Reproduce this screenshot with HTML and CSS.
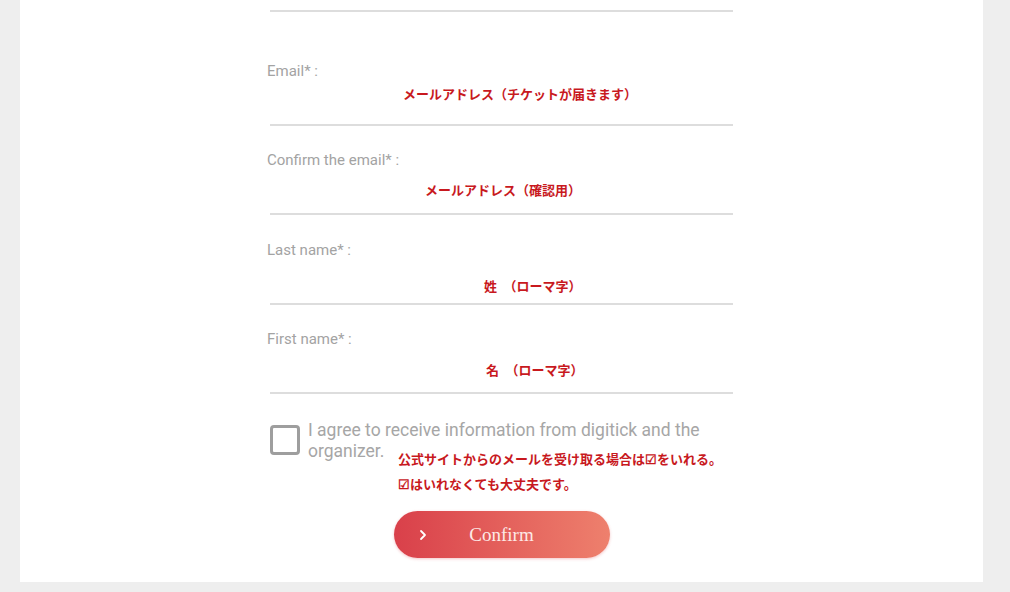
FILE: index.html
```html
<!DOCTYPE html>
<html lang="ja">
<head>
  <meta charset="UTF-8">
  <meta name="viewport" content="width=device-width, initial-scale=1.0">
  <title>Digitick - Coordonnées</title>
  <link rel="stylesheet" href="styles.css">
</head>
<body>
  <div class="panel">
    <form class="form">
      <!-- champ précédent, seul le bas est visible -->
      <div class="field field-prev"></div>

      <div class="field field-first">
        <label class="label">Email* :</label>
        <div class="input">
          <span class="note note-email">メールアドレス（チケットが届きます）</span>
        </div>
      </div>

      <div class="field">
        <label class="label">Confirm the email* :</label>
        <div class="input">
          <span class="note note-confirm">メールアドレス（確認用）</span>
        </div>
      </div>

      <div class="field field-last">
        <label class="label">Last name* :</label>
        <div class="input">
          <span class="note note-last">姓　（ローマ字）</span>
        </div>
      </div>

      <div class="field">
        <label class="label">First name* :</label>
        <div class="input">
          <span class="note note-firstname">名　（ローマ字）</span>
        </div>
      </div>

      <div class="optin">
        <span class="checkbox"></span>
        <span class="optin-text">I agree to receive information from digitick and the organizer.</span>
        <div class="optin-note">
          公式サイトからのメールを受け取る場合は☑をいれる。<br>
          ☑はいれなくても大丈夫です。
        </div>
      </div>

      <button type="button" class="btn-confirm">
        <svg class="chevron" width="8" height="12" viewBox="0 0 8 12">
          <polyline points="2,2 6,6 2,10" fill="none" stroke="#fff" stroke-width="1.8" stroke-linecap="round" stroke-linejoin="round"/>
        </svg>
        <span class="btn-label">Confirm</span>
        <span></span>
      </button>
    </form>
  </div>
</body>
</html>
```

FILE: styles.css
```css
html, body {
  margin: 0;
  padding: 0;
}
body {
  background: #eeeeee;
  font-family: Roboto, "Liberation Sans", "Noto Sans CJK JP", sans-serif;
  padding-bottom: 10px;
}
.panel {
  background: #fff;
  margin: 0 27px 0 20px;
  padding-bottom: 24px;
}
.form {
  width: 463px;
  margin: 0 auto;
  display: flex;
  flex-direction: column;
}

.field {
  padding-top: 24px;
  border-bottom: 2px solid #dddddd;
}
.field-prev {
  padding-top: 10px;
}
.field-first {
  padding-top: 49px;
}
.field-last {
  padding-top: 25px;
}
.label {
  display: block;
  margin-left: -3px;
  font-size: 15px;
  line-height: 20px;
  color: #a3a3a3;
}
.input {
  height: 43px;
}

/* annotations rouges */
.note {
  display: block;
  font-family: "Noto Sans CJK JP", sans-serif;
  font-weight: bold;
  font-size: 13px;
  line-height: 16px;
  color: #c8191e;
}
.note-email { padding: 5px 0 0 133px; }
.note-confirm { padding: 12px 0 0 155px; }
.note-last { padding: 18px 0 0 214px; }
.note-firstname { padding: 13px 0 0 216px; }

.optin {
  position: relative;
  display: flex;
  gap: 8px;
  margin-top: 26px;
}
.checkbox {
  flex: none;
  width: 24px;
  height: 24px;
  margin-top: 5px;
  border: 3px solid #9e9e9e;
  border-radius: 4px;
}
.optin-text {
  font-size: 17.5px;
  line-height: 21px;
  color: #a6a6a6;
}
.optin-note {
  position: absolute;
  top: 26px;
  left: 128px;
  font-family: "Noto Sans CJK JP", sans-serif;
  font-weight: bold;
  font-size: 13px;
  line-height: 25px;
  color: #c8191e;
  background: #fff;
}

.btn-confirm {
  align-self: center;
  margin-top: 49px;
  width: 216px;
  height: 47px;
  border: none;
  border-radius: 24px;
  background: linear-gradient(to right, #d9404a, #ee806d);
  box-shadow: 0 1px 3px rgba(217, 64, 74, 0.3);
  display: grid;
  grid-template-columns: 1fr auto 1fr;
  align-items: center;
  padding: 0;
  cursor: pointer;
}
.chevron {
  justify-self: start;
  margin-left: 25px;
}
.btn-label {
  font-family: "Liberation Serif", serif;
  font-size: 19px;
  color: #fde9e6;
}
```
